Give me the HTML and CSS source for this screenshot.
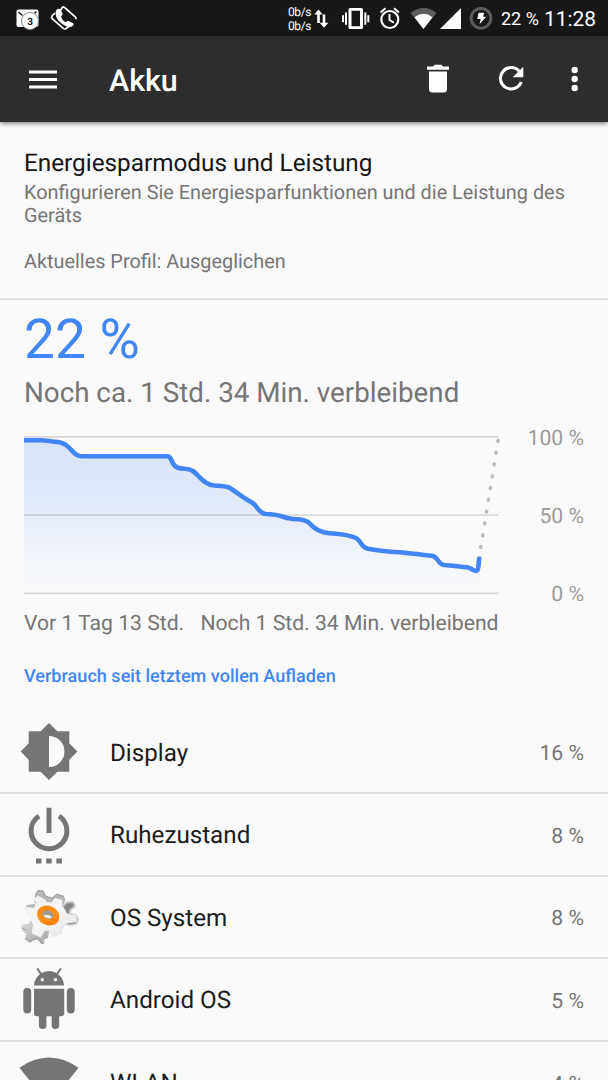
FILE: index.html
```html
<!DOCTYPE html>
<html lang="de">
<head>
<meta charset="utf-8">
<title>Akku</title>
<link rel="stylesheet" href="styles.css">
</head>
<body>
<div class="screen">
  <header class="statusbar">
    <svg class="status-left" width="90" height="36" viewBox="0 0 90 36">
      <rect x="16.500" y="9.500" width="22" height="17.500" rx="2" fill="#fff"/>
      <path d="M18.500 12l4 3.500M36.500 11.500l-2 2" stroke="#171717" stroke-width="1.400"/>
      <circle cx="30" cy="21" r="8.500" fill="#fff" stroke="#888" stroke-width="1"/>
      <text class="badge-number" x="30" y="25" text-anchor="middle">3</text>
      <path d="M60 11l2.300-3.500q1-1 2.300 0L75.500 17q1 1 0 2.200M73 23.500L66 28.500q-1.500 1-2.500 0L52.500 19q-1.500-1.500-.5-3l3-3" fill="none" stroke="#fff" stroke-width="1.700"/>
      <path d="M57 9.300q2-1.300 3.500.2l2 4q.6 1.600-1.600 3.200 1 3.300 4.700 5.500 2.500-1.700 4-.8l3.500 1.800q1.400 1-.2 2.500-2.500 2.500-6.900.6-7.500-3.700-9.800-9.500-1.500-5.700.8-7.500z" fill="#fff"/>
    </svg>
    <div class="status-right">
      <div class="netspeed"><span>0b/s</span><span>0b/s</span></div>
      <svg width="180" height="36" viewBox="313 0 180 36">
        <g fill="#fff">
          <path d="M318.500 9.500l4.200 5h-2.900v8.500h-2.600v-8.500h-2.900zM324 27.800l-4.300-5h3v-8.300h2.600v8.300h3z"/>
          <path d="M350 8h11.500q1.500 0 1.500 1.500v18q0 1.500-1.500 1.500H350q-1.500 0-1.500-1.500v-18Q348.500 8 350 8zm1.500 2.700v15.600h8.500V10.700zM345 12.500h2v12.300h-2zM342 15.300h2v7h-2zM364.300 12.500h2v12.300h-2zM367.300 15.300h2v7h-2z"/>
          <circle cx="389.800" cy="19.500" r="8.500" fill="none" stroke="#fff" stroke-width="2.200"/>
          <path d="M389.500 14v6l4.500 2.700M380.500 12.500l5-4.300M399 12.500l-5-4.300" fill="none" stroke="#fff" stroke-width="1.900"/>
        </g>
        <path d="M410.500 13Q423.500 3 436.500 13L423.500 29z" fill="#5d5d5d"/>
        <path d="M414.500 17.200Q423.500 10.500 432.500 17.200L423.500 29z" fill="#fff"/>
        <path d="M461 8v21h-21z" fill="#fff"/>
        <circle cx="481" cy="18.300" r="9.900" fill="#171717" stroke="#5b5b5b" stroke-width="3"/>
        <path d="M478.700 12.800h5.500l-1.200 4h3.200l-6.700 7.400 1.200-5.100h-3.500z" fill="#fff"/>
      </svg>
      <span class="status-percent">22 %</span>
      <span class="clock">11:28</span>
    </div>
  </header>

  <nav class="appbar">
    <svg class="menu-icon" width="28" height="20" viewBox="0 0 28 20"><path d="M0 2h28M0 9.500h28M0 17h28" stroke="#fff" stroke-width="2.800"/></svg>
    <h1 class="appbar-title">Akku</h1>
    <svg width="182" height="40" viewBox="426 60 182 40">
      <path d="M427 66.500h6l1.500-1.700h7l1.500 1.700h6v3.200h-22zM429 71.500h18V89q0 3.500-3.500 3.500h-11q-3.500 0-3.500-3.500z" fill="#fff"/>
      <path d="M519.300 71.300A10.700 10.700 0 1 0 521.200 82" fill="none" stroke="#fff" stroke-width="3.100"/>
      <path d="M523.300 66.700v10.600h-10.600z" fill="#fff"/>
      <g fill="#fff"><circle cx="574.700" cy="70" r="3.200"/><circle cx="574.700" cy="79" r="3.200"/><circle cx="574.700" cy="88" r="3.200"/></g>
    </svg>
  </nav>

  <main>
    <section class="profile">
      <h2 class="profile-title">Energiesparmodus und Leistung</h2>
      <p class="profile-text">Konfigurieren Sie Energiesparfunktionen und die Leistung des Geräts<br><br>Aktuelles Profil: Ausgeglichen</p>
    </section>

    <section class="usage">
      <div class="level">22 %</div>
      <div class="remaining">Noch ca. 1 Std. 34 Min. verbleibend</div>
      <div class="chart">
        <svg width="478" height="180" viewBox="24 426 478 180">
          <defs>
            <linearGradient id="area" gradientUnits="userSpaceOnUse" x1="0" y1="436" x2="0" y2="593">
              <stop offset="0" stop-color="#4285f4" stop-opacity=".19"/>
              <stop offset=".35" stop-color="#4285f4" stop-opacity=".145"/>
              <stop offset="1" stop-color="#4285f4" stop-opacity="0"/>
            </linearGradient>
          </defs>
          <path d="M24 440.300H40C48 440.300 49 441.500 55 441.700C72 442.500 71 456 81 456.200H167C173 456.200 170 464 177 467.300C183 470 187 467.500 193 471C198 474.500 204 485 214 485.500C220 486 224 485.500 229 487.500C237 492.500 245 499 252 502.500C258 506 258 513.500 266 514C282 514.500 282 517.500 290 518.500C297 520 302 518 308 522C313 526 314 530 325 532.500C336 534.500 345 533 356 538C361 540.500 361 547.500 368 548.700C382 551 389 552 400 552.300C412 553.500 420 554.500 433 556C439 558 437 563.500 444 565C454 565.500 460 567 467 567.300C473 568.500 475 573 477.500 570C478.700 568 478.700 561 479.200 558.500V593H24z" fill="url(#area)"/>
          <path d="M24 436.800H498.500M24 515H498.500M24 593.300H498.500" stroke="#000" stroke-opacity=".14" stroke-width="1.700"/>
          <path d="M498 440.500L480.500 549" fill="none" stroke="#bdbdbd" stroke-width="3.600" stroke-linecap="round" stroke-dasharray=".9 11.030"/>
          <path d="M24 440.300H40C48 440.300 49 441.500 55 441.700C72 442.500 71 456 81 456.200H167C173 456.200 170 464 177 467.300C183 470 187 467.500 193 471C198 474.500 204 485 214 485.500C220 486 224 485.500 229 487.500C237 492.500 245 499 252 502.500C258 506 258 513.500 266 514C282 514.500 282 517.500 290 518.500C297 520 302 518 308 522C313 526 314 530 325 532.500C336 534.500 345 533 356 538C361 540.500 361 547.500 368 548.700C382 551 389 552 400 552.300C412 553.500 420 554.500 433 556C439 558 437 563.500 444 565C454 565.500 460 567 467 567.300C473 568.500 475 573 477.500 570C478.700 568 478.700 561 479.200 558.500" fill="none" stroke="#4285f4" stroke-width="4.600"/>
          <circle cx="479.200" cy="558.500" r="2.300" fill="#4285f4"/>
        </svg>
        <div class="scale"><span>100 %</span><span>50 %</span><span>0 %</span></div>
      </div>
      <div class="timespan"><span>Vor 1 Tag 13 Std.</span><span>Noch 1 Std. 34 Min. verbleibend</span></div>
    </section>

    <h3 class="category">Verbrauch seit letztem vollen Aufladen</h3>

    <ul class="apps">
      <li class="app">
        <svg class="app-icon" width="62" height="66" viewBox="18 719 62 66">
          <path d="M49 723l8.300 8.300h12v12l8.100 8.200-8.100 8.300v12h-12l-8.300 8.200-8.300-8.200h-12v-12l-8.100-8.300 8.100-8.200v-12h12z" fill="#757575"/>
          <path d="M49 736a15.500 15.500 0 0 1 0 31z" fill="#fafafa"/>
        </svg>
        <span class="app-name">Display</span><span class="app-percent">16 %</span>
      </li>
      <li class="app">
        <svg class="app-icon" width="62" height="66" viewBox="18 802 62 66">
          <path d="M39 817A17.900 17.900 0 1 0 59 817M49 808.700V834" fill="none" stroke="#757575" stroke-width="5"/>
          <path d="M36 859.500h5.500v5H36zM46.200 859.500h5.500v5h-5.500zM56.400 859.500h5.500v5h-5.500z" fill="#757575"/>
        </svg>
        <span class="app-name">Ruhezustand</span><span class="app-percent">8 %</span>
      </li>
      <li class="app">
        <svg class="app-icon" width="62" height="66" viewBox="18 884 62 66">
          <defs>
            <linearGradient id="steel" x1="0" y1="0" x2="1" y2="1"><stop offset="0" stop-color="#dedfdf"/><stop offset=".5" stop-color="#bcbdbd"/><stop offset="1" stop-color="#a6a7a7"/></linearGradient>
            <linearGradient id="silver" x1="0" y1="0" x2="1" y2="1"><stop offset="0" stop-color="#eef0f1"/><stop offset=".5" stop-color="#f5f6f7"/><stop offset="1" stop-color="#e0e2e4"/></linearGradient>
            <linearGradient id="orange" x1="0" y1="0" x2="1" y2="1"><stop offset="0" stop-color="#f78205"/><stop offset=".5" stop-color="#ff9317"/><stop offset="1" stop-color="#f77500"/></linearGradient>
            <filter id="gear-shadow" x="-20%" y="-20%" width="140%" height="140%"><feGaussianBlur stdDeviation=".9"/></filter>
          </defs>
          <path d="M63 906l4-3.500 6-.5 2 4-5 4-1 4 7 1.500 2 4-2 4.500-8 1-6-6z" fill="#858687" filter="url(#gear-shadow)"/>
          <path d="M35 895l3-4.500 5 .5 3 5.500 6 1.500 5-4 7 2.500 1.500 3.500-3 6-12 2-16-5zM25 908l2-3 8-1 1 5z" fill="#b4b6b7"/>
          <path d="M35 895l3-4.500 5 .5 3 5.500 6 1.500 5-4 7 2.500" fill="none" stroke="#8f9191" stroke-width=".9"/>
          <path d="M21 925l7-1 3-4 18 11-1 7-4 1.500.500 4-3 .8-4-4.800-5 1.500-2.500 2-5-3.500 1.500-6-4-2z" fill="url(#steel)"/>
          <path d="M21.500 928l5 2M25 938l5 3.500 3-2.500 5-.5 4.500 5" fill="none" stroke="#999a9a" stroke-width=".9"/>
          <path d="M24.500 912l1.500-5.500 7.500 1.500 3-4-2-5.500 3.500-3 7 4 1.500 2.500 5 .5 3.500-4.500 7.500 2-.500 6 3.500 4 1.500 3.500 9.500 2 .5 6.500-11 1.500-4.500 4.500v5l-8.500 3.500-3.500-6-5 .5-4 6.500-9-4 1.500-8-2-6z" fill="url(#silver)"/>
          <path d="M66.500 923.500l-4.500 4.500v5l-8.500 3.500-3.500-6-5 .5-4 6.500-9-4" fill="none" stroke="#d3d5d6" stroke-width=".6"/>
          <ellipse cx="48.200" cy="915.500" rx="11.500" ry="9.700" transform="rotate(24 48.200 915.500)" fill="url(#orange)"/>
          <ellipse cx="47.900" cy="914.800" rx="5.600" ry="4.300" transform="rotate(24 48 914.800)" fill="#9f9890"/>
          <path d="M43.500 915.500q4.500-2 8.500 1.500-2.500 2.700-6 .8-1.800-.8-2.500-2.300z" fill="#eee"/>
        </svg>
        <span class="app-name">OS System</span><span class="app-percent">8 %</span>
      </li>
      <li class="app">
        <svg class="app-icon" width="62" height="66" viewBox="18 967 62 66">
          <g fill="#757575">
            <path d="M34 986.500Q34.500 978 42 973.700q7-3.500 14 0 7.500 4.300 8 12.800z"/>
            <path d="M37.500 970l3.500 5M60.500 970l-3.500 5" stroke="#757575" stroke-width="2" stroke-linecap="round"/>
            <path d="M34 989.700h30.200v24.500q0 3-3 3h-2v9a3.700 3.700 0 0 1-7.500 0v-9h-5.300v9a3.700 3.700 0 0 1-7.500 0v-9H37q-3 0-3-3z"/>
            <rect x="23.300" y="989" width="7.900" height="25.500" rx="3.900"/>
            <rect x="66.800" y="989" width="7.900" height="25.500" rx="3.900"/>
          </g>
          <circle cx="42.300" cy="980.700" r="1.700" fill="#fafafa"/><circle cx="55.500" cy="980.700" r="1.700" fill="#fafafa"/>
        </svg>
        <span class="app-name">Android OS</span><span class="app-percent">5 %</span>
      </li>
      <li class="app">
        <svg class="app-icon" width="62" height="66" viewBox="18 1050 62 66">
          <path d="M19.500 1068.700Q49 1048.500 78.500 1068.700L49 1106z" fill="#757575"/>
        </svg>
        <span class="app-name">WLAN</span><span class="app-percent">4 %</span>
      </li>
    </ul>
  </main>
</div>
</body>
</html>
```
FILE: styles.css
```css
* { box-sizing: border-box; }

html, body { height: 100%; overflow: hidden; }

body {
  margin: 0;
  font-family: Roboto, sans-serif;
  background: #fafafa;
  color: #212121;
  text-rendering: geometricPrecision;
}

h1, h2, h3, p, ul { margin: 0; padding: 0; font-weight: 400; }

svg { display: block; flex: none; }

.screen { width: 608px; height: 1080px; overflow: hidden; }

.statusbar {
  display: flex;
  justify-content: space-between;
  height: 36px;
  background: #171717;
  color: #fff;
}

.badge-number { font: 700 10px Roboto, sans-serif; fill: #171717; }

.status-right { display: flex; align-items: center; padding-right: 12px; white-space: nowrap; }

.netspeed {
  display: flex;
  flex-direction: column;
  width: 25px;
  font-size: 12px;
  letter-spacing: -.4px;
  line-height: 14px;
  padding-top: 2px;
}

.status-percent { width: 51px; padding-left: 8px; font-size: 18px; padding-top: 2px; }

.clock { width: 52px; font-size: 20.900px; padding-top: 3px; }

.appbar {
  display: flex;
  align-items: center;
  height: 85.500px;
  padding: 2px 0 0 29px;
  background: #2d2d2d;
  color: #fff;
  box-shadow: 0 1px 5px rgba(0, 0, 0, .6);
}

.appbar-title {
  flex: 1;
  margin-left: 52px;
  padding-top: 3px;
  font-size: 30.400px;
  font-weight: 500;
}

.profile {
  height: 178px;
  padding: 26.400px 24px 0;
  border-bottom: 2px solid #dedede;
}

.profile-title { font-size: 24.300px; line-height: 29px; color: #151515; }

.profile-text { margin-top: 4px; font-size: 19.880px; line-height: 23.100px; color: #757575; }

.usage { height: 345px; padding: 8px 24px 0; }

.level { font-size: 55px; line-height: 64px; color: #4285f4; }

.remaining { margin-top: 4px; font-size: 27.780px; line-height: 34px; color: #757575; }

.chart { display: flex; justify-content: space-between; height: 180px; margin-top: 16px; }

.scale {
  display: flex;
  flex-direction: column;
  justify-content: space-between;
  height: 180px;
  margin-top: 1px;
  font-size: 21.200px;
  line-height: 24px;
  text-align: right;
  color: #9a9a9a;
}

.timespan {
  display: flex;
  justify-content: space-between;
  width: 474.500px;
  margin-top: 5.500px;
  font-size: 21.150px;
  line-height: 26px;
  color: #757575;
}

.category {
  height: 66.700px;
  padding: 21px 24px 0;
  font-size: 18.080px;
  font-weight: 500;
  line-height: 22px;
  color: #4285f4;
}

.apps { list-style: none; }

.app {
  display: flex;
  align-items: center;
  height: 82.660px;
  padding: 0 24px 0 18px;
  border-bottom: 2px solid #dedede;
}

.app-name { flex: 1; margin-left: 30px; padding-top: 2px; font-size: 24.200px; color: #1c1c1c; }

.app-percent { padding-top: 4px; font-size: 21.200px; color: #757575; }
```
